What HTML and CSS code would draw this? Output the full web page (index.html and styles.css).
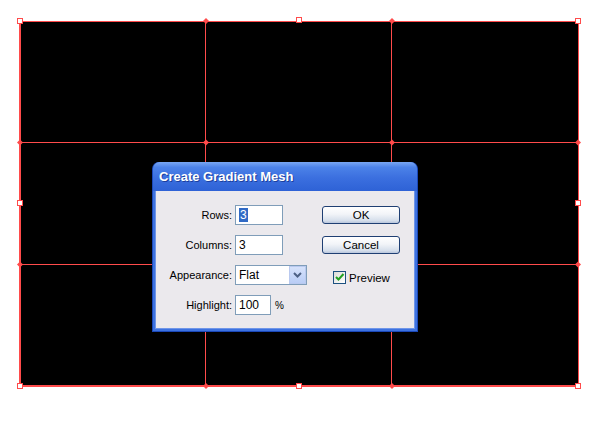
FILE: index.html
```html
<!DOCTYPE html>
<html lang="en">
<head>
  <meta charset="UTF-8" />
  <title>Create Gradient Mesh</title>
  <link rel="stylesheet" href="styles.css">
</head>
<body>

  <svg class="artboard" width="600" height="435" viewBox="0 0 600 435">
    <rect x="20" y="21" width="558" height="365" fill="#000" />
    <g stroke="#ff4b4b" fill="none">
      <line x1="20" y1="21.5" x2="578" y2="21.5" />
      <line x1="20" y1="142.5" x2="578" y2="142.5" />
      <line x1="20" y1="264.5" x2="578" y2="264.5" />
      <line x1="20" y1="386" x2="578" y2="386" stroke-width="2" />
      <line x1="20" y1="21" x2="20" y2="386" stroke-width="2" />
      <line x1="205.5" y1="21" x2="205.5" y2="386" />
      <line x1="391.5" y1="21" x2="391.5" y2="386" />
      <line x1="578.5" y1="21" x2="578.5" y2="386" />
    </g>
    <g fill="#ff4b4b">
      <path d="M206 18 l3 3 l-3 3 l-3 -3 z" />
      <path d="M392 18 l3 3 l-3 3 l-3 -3 z" />
      <path d="M20 139.5 l3 3 l-3 3 l-3 -3 z" />
      <path d="M206 139.5 l3 3 l-3 3 l-3 -3 z" />
      <path d="M392 139.5 l3 3 l-3 3 l-3 -3 z" />
      <path d="M578 139.5 l3 3 l-3 3 l-3 -3 z" />
      <path d="M20 261.5 l3 3 l-3 3 l-3 -3 z" />
      <path d="M578 261.5 l3 3 l-3 3 l-3 -3 z" />
      <path d="M206 383 l3 3 l-3 3 l-3 -3 z" />
      <path d="M392 383 l3 3 l-3 3 l-3 -3 z" />
    </g>
    <g fill="#fff" stroke="#ff4b4b">
      <rect x="17.5" y="18.5" width="5" height="5" />
      <rect x="575.5" y="18.5" width="5" height="5" />
      <rect x="296.5" y="17.5" width="5" height="5" />
      <rect x="17.5" y="200.5" width="5" height="5" />
      <rect x="575.5" y="200.5" width="5" height="5" />
      <rect x="17.5" y="383.5" width="5" height="5" />
      <rect x="575.5" y="383.5" width="5" height="5" />
      <rect x="296.5" y="383.5" width="5" height="5" />
    </g>
  </svg>

  <div class="dialog">
    <div class="dialog-title">Create Gradient Mesh</div>
    <div class="dialog-body">
      <div class="fields">
        <div class="label">Rows:</div>
        <div class="field">
          <div class="textbox small"><span class="selected">3</span></div>
        </div>
        <div class="label">Columns:</div>
        <div class="field">
          <div class="textbox small">3</div>
        </div>
        <div class="label">Appearance:</div>
        <div class="field">
          <div class="dropdown">
            <span>Flat</span>
            <div class="dropdown-btn">
              <svg width="9" height="6" viewBox="0 0 9 6"><path d="M1 1 l3.5 3.5 l3.5 -3.5" stroke="#4d6185" stroke-width="2" fill="none" /></svg>
            </div>
          </div>
        </div>
        <div class="label">Highlight:</div>
        <div class="field">
          <div class="textbox tiny">100</div>
          <span class="unit">%</span>
        </div>
      </div>
      <div class="actions">
        <div class="button">OK</div>
        <div class="button">Cancel</div>
        <div class="check-row">
          <div class="checkbox">
            <svg width="11" height="11" viewBox="0 0 11 11"><path d="M2 5 l2.5 2.5 l5 -5.5" stroke="#21a121" stroke-width="2" fill="none" /></svg>
          </div>
          <span>Preview</span>
        </div>
      </div>
    </div>
  </div>

</body>
</html>
```

FILE: styles.css
```css
body {
  margin: 0;
  background: #fff;
  width: 600px;
  height: 435px;
  overflow: hidden;
  font-family: "Liberation Sans", Arial, sans-serif;
  position: relative;
}
.artboard {
  position: absolute;
  left: 0;
  top: 0;
}
.dialog {
  position: absolute;
  left: 152px;
  top: 162px;
  width: 266px;
  height: 170px;
  box-sizing: border-box;
  border: 1px solid #1b48b8;
  border-top: none;
  border-radius: 7px 7px 0 0;
  background: #3d72e0;
  padding: 0 2px 2px 2px;
  display: flex;
  flex-direction: column;
}
.dialog-title {
  height: 29px;
  margin: 0 -2px;
  border-radius: 7px 7px 0 0;
  background: linear-gradient(#79a6f2 0%, #4c82e8 18%, #3b6fdf 55%, #2e62d6 100%);
  color: #fff;
  font-weight: bold;
  font-size: 13px;
  line-height: 30px;
  padding-left: 6px;
  text-shadow: 1px 1px 0 #1c3f9c;
}
.dialog-body {
  flex: 1;
  background: #ebe9ed;
  border: 1px solid #6f95e8;
  border-top: none;
  display: flex;
  padding-top: 14px;
}
.fields {
  display: grid;
  grid-template-columns: 76px 72px;
  column-gap: 3px;
  row-gap: 10px;
  grid-auto-rows: 20px;
  align-items: center;
}
.label {
  text-align: right;
  font-size: 11px;
  color: #000;
}
.field {
  display: flex;
  align-items: center;
}
.textbox {
  height: 20px;
  box-sizing: border-box;
  border: 1px solid #7f9db9;
  background: #fff;
  font-size: 12px;
  line-height: 18px;
  padding-left: 3px;
}
.textbox.small {
  width: 48px;
}
.textbox.tiny {
  width: 36px;
}
.selected {
  background: #316ac5;
  color: #fff;
  padding: 0 1px;
}
.unit {
  font-size: 10px;
  margin-left: 4px;
}
.dropdown {
  width: 72px;
  height: 20px;
  box-sizing: border-box;
  border: 1px solid #7f9db9;
  background: #fff;
  display: flex;
  align-items: center;
  justify-content: space-between;
  font-size: 12px;
  padding-left: 3px;
}
.dropdown-btn {
  width: 17px;
  height: 18px;
  box-sizing: border-box;
  border: 1px solid #b9c9ef;
  background: linear-gradient(#d6e2fb, #b9cdf6);
  display: flex;
  align-items: center;
  justify-content: center;
}
.actions {
  margin-left: 15px;
  display: flex;
  flex-direction: column;
  gap: 12px;
  padding-top: 1px;
}
.button {
  width: 78px;
  height: 18px;
  box-sizing: border-box;
  border: 1px solid #1f3f73;
  border-radius: 3px;
  background: linear-gradient(#ffffff 0%, #f2f4f8 45%, #d5deeb 85%, #b9c6dc 100%);
  font-size: 11.5px;
  line-height: 16px;
  text-align: center;
  color: #000;
}
.check-row {
  display: flex;
  align-items: center;
  gap: 3px;
  margin-left: 11px;
  margin-top: 5px;
  font-size: 11.5px;
}
.checkbox {
  width: 13px;
  height: 13px;
  box-sizing: border-box;
  border: 1px solid #1c5180;
  background: linear-gradient(135deg, #dcdcd7, #fff);
  display: flex;
  align-items: center;
  justify-content: center;
}
```
